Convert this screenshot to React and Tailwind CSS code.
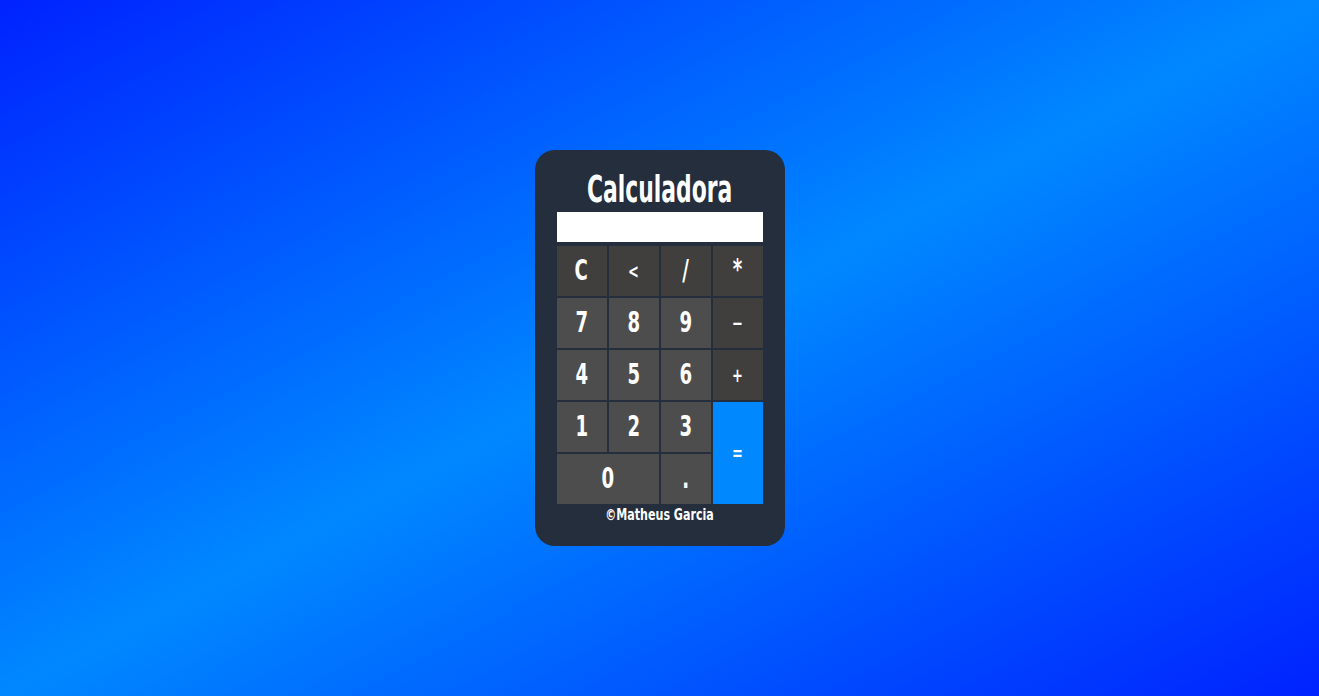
import React from 'react';

const font = { fontFamily: '"Liberation Sans Narrow", "DejaVu Sans Condensed", "Liberation Sans", sans-serif' };

const keys = [
  { label: 'C', op: true },
  { label: '<', op: true, small: true },
  { label: '/', op: true },
  { label: '*', op: true, top: true },
  { label: '7' },
  { label: '8' },
  { label: '9' },
  { label: '−', op: true, small: true },
  { label: '4' },
  { label: '5' },
  { label: '6' },
  { label: '+', op: true, small: true },
  { label: '1' },
  { label: '2' },
  { label: '3' },
  { label: '=', equals: true },
  { label: '0', wide: true },
  { label: '.' },
];

const Key = ({ k }) => {
  let cls = 'flex items-center justify-center text-white font-bold ';
  if (k.equals) cls += 'row-span-2 bg-[#0088ff] text-[20px]';
  else if (k.op) cls += 'bg-[#403f3e] ';
  else cls += 'bg-[#4d4d4d] text-[28px]';
  if (k.wide) cls += ' col-span-2';
  if (k.op) cls += k.small ? 'text-[20px]' : 'text-[28px]';
  return (
    <button className={cls}>
      <span className={'inline-block scale-x-[0.72]' + (k.top ? ' -mt-[3px]' : '')}>{k.label}</span>
    </button>
  );
};

const App = () => {
  return (
    <div
      className="min-h-screen w-full flex items-center justify-center bg-[linear-gradient(to_bottom_right,#0022ff,#0088ff,#0022ff)]"
      style={font}
    >
      <div className="w-[250px] h-[396px] rounded-[20px] bg-[#242e3c] px-[22px] flex flex-col">
        {/* Title */}
        <h1 className="pt-[20px] mb-[4px] flex justify-center whitespace-nowrap text-white font-bold text-[38px] leading-[38px]">
          <span className="inline-block scale-x-[0.64]">Calculadora</span>
        </h1>

        {/* Display */}
        <div className="h-[30px] bg-white"></div>

        {/* Keys */}
        <div className="mt-[4px] grid grid-cols-[repeat(4,50px)] grid-rows-[repeat(5,50px)] gap-[2px]">
          {keys.map((k) => (
            <Key key={k.label} k={k} />
          ))}
        </div>

        <p className="flex justify-center whitespace-nowrap text-white font-bold text-[16px] leading-[22px]">
          <span className="inline-block scale-x-[0.77]">©Matheus Garcia</span>
        </p>
      </div>
    </div>
  );
};

export default App;
